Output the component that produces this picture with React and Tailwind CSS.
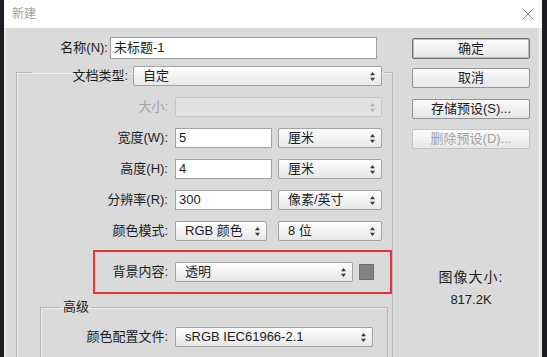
import React from 'react';

// Small up/down arrow used by the drop-down boxes
const Arrows = ({ dim }) => (
  <svg width="5" height="9" viewBox="0 0 5 9" className="shrink-0">
    <path d="M2.5 0L5 3.2H0z M0 5.8h5L2.5 9z" fill={dim ? '#b4b4b4' : '#3a3a3a'} />
  </svg>
);

const Select = ({ value, className = '', disabled }) => (
  <div
    className={`h-[20px] flex items-center justify-between pl-[9px] pr-[6px] rounded-[2px] border ${
      disabled
        ? 'border-[#c6c6c6] bg-[#e2e2e2] text-[#9a9a9a]'
        : 'border-[#a3a3a3] bg-gradient-to-b from-[#fdfdfd] to-[#e8e8e8]'
    } ${className}`}
  >
    <span className="leading-[18px] whitespace-nowrap">{value}</span>
    <Arrows dim={disabled} />
  </div>
);

const Input = ({ value, className = '' }) => (
  <div className={`h-[20px] bg-white border border-[#a2a2a2] pl-[3px] leading-[18px] ${className}`}>{value}</div>
);

// One labelled line inside the main group
const Row = ({ label, dim, children, labelW = 'w-[151px]', className = 'mt-[11px]' }) => (
  <div className={`flex items-center h-[20px] ${className}`}>
    <div className={`${labelW} text-right shrink-0 whitespace-nowrap ${dim ? 'text-[#a3a3a3]' : ''}`}>{label}</div>
    <div className="ml-[7px] flex items-center">{children}</div>
  </div>
);

const Button = ({ children, primary, disabled, className = '' }) => (
  <div
    className={`w-[118px] flex items-center justify-center rounded-[2px] border bg-gradient-to-b from-[#fbfbfb] to-[#e6e6e6] ${
      primary
        ? 'h-[21px] border-[#6f6f6f] shadow-[inset_0_0_0_1px_#bdbdbd]'
        : disabled
        ? 'h-[20px] border-[#c4c4c4] text-[#a3a3a3] from-[#ececec] to-[#e2e2e2]'
        : 'h-[20px] border-[#949494]'
    } ${className}`}
  >
    {children}
  </div>
);

export default function App() {
  return (
    <div className="w-[547px] h-[357px] overflow-hidden bg-[#1b1d20] flex font-['Liberation_Sans','Noto_Sans_CJK_SC',sans-serif] text-[13px] text-[#1c1c1c]">
      <div className="ml-[4px] w-[538px] flex flex-col">
        {/* Title bar */}
        <div className="h-[28px] shrink-0 bg-white flex items-center justify-between pl-[8px] pr-[8px]">
          <span className="text-[12px] text-[#a2a2a2]">新建</span>
          <svg width="12" height="12" viewBox="0 0 12 12">
            <path d="M0.5 0.5L11.5 11.5M11.5 0.5L0.5 11.5" stroke="#8d8d8d" strokeWidth="1" />
          </svg>
        </div>

        {/* Body */}
        <div className="flex-1 bg-[#dadada] border-l-[2px] border-r-[4px] border-l-[#ebebeb] border-r-[#e9e9e9] flex pt-[9px]">
          {/* Left column */}
          <div className="w-[384px] shrink-0 flex flex-col">
            <div className="flex items-center h-[22px]">
              <div className="w-[102px] text-right">名称(N):</div>
              <Input value="未标题-1" className="ml-[2px] w-[267px] h-[22px] leading-[20px]" />
            </div>

            <fieldset className="ml-[10px] -mt-[1px] border border-[#b8b8b8] shadow-[inset_1px_1px_0_#efefef]">
              <legend className="ml-[15px] pt-[8px] pr-[2px] flex items-center">
                <div className="w-[96px] text-right">文档类型:</div>
                <Select value="自定" className="ml-[5px] w-[249px]" />
              </legend>

              <Row label="大小:" dim>
                <Select value="" disabled className="w-[207px]" />
              </Row>
              <Row label="宽度(W):">
                <Input value="5" className="w-[97px]" />
                <Select value="厘米" className="ml-[6px] w-[104px]" />
              </Row>
              <Row label="高度(H):">
                <Input value="4" className="w-[97px]" />
                <Select value="厘米" className="ml-[6px] w-[104px]" />
              </Row>
              <Row label="分辨率(R):">
                <Input value="300" className="w-[97px]" />
                <Select value="像素/英寸" className="ml-[6px] w-[104px]" />
              </Row>
              <Row label="颜色模式:">
                <Select value="RGB 颜色" className="w-[92px]" />
                <Select value="8 位" className="ml-[11px] w-[104px]" />
              </Row>

              <div className="mt-[9px] ml-[76px] w-[299px] h-[44px] border-2 border-[#e8363a] pt-[10px]">
                <Row label="背景内容:" labelW="w-[73px]" className="">
                  <Select value="透明" className="w-[178px]" />
                  <div className="ml-[6px] w-[15px] h-[16px] bg-[#828282] border border-[#707070]" />
                </Row>
              </div>

              <fieldset className="mt-[5px] ml-[23px] mr-[4px] h-[60px] border border-[#b8b8b8] shadow-[inset_1px_1px_0_#efefef]">
                <legend className="ml-[20px] px-[2px] leading-[16px]">高级</legend>
                <Row label="颜色配置文件:" labelW="w-[127px]" className="mt-[12px]">
                  <Select value="sRGB IEC61966-2.1" className="w-[198px]" />
                </Row>
              </fieldset>
            </fieldset>
          </div>

          {/* Right column */}
          <div className="ml-[22px] flex flex-col items-center">
            <Button primary className="mt-[1px]">确定</Button>
            <Button className="mt-[9px]">取消</Button>
            <Button className="mt-[11px]">存储预设(S)...</Button>
            <Button disabled className="mt-[10px]">删除预设(D)...</Button>
            <div className="mt-[120px] text-[14px] leading-[16px] tracking-[1px]">图像大小:</div>
            <div className="mt-[7px] leading-[16px]">817.2K</div>
          </div>
        </div>
      </div>
    </div>
  );
}
